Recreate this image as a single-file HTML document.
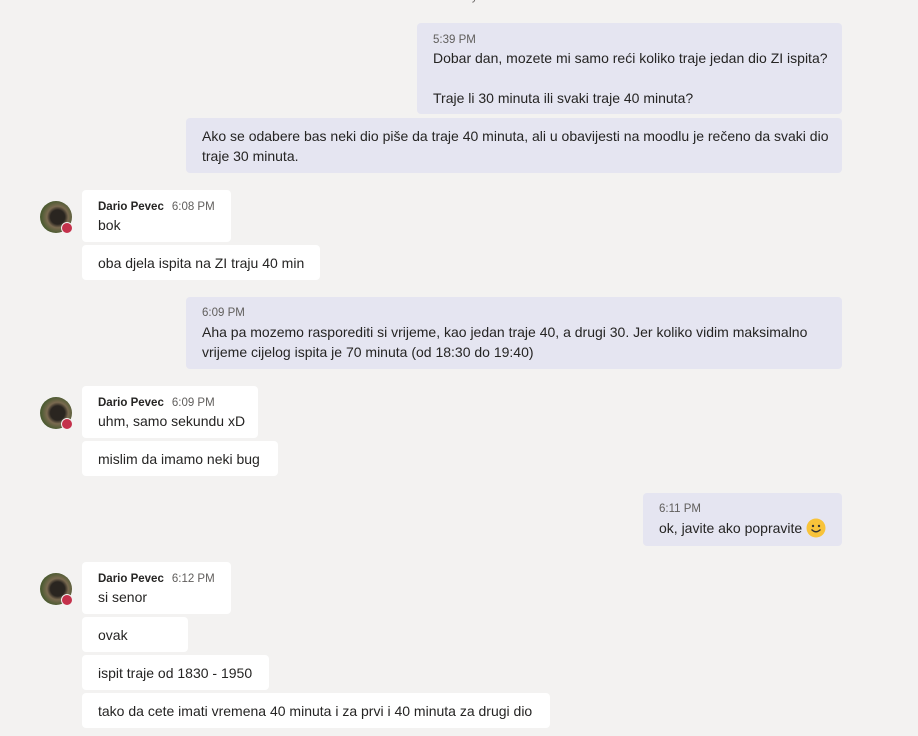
<!DOCTYPE html>
<html><head><meta charset="utf-8"><style>
body{margin:0;width:918px;height:736px;background:#f3f2f1;overflow:hidden;position:relative;font-family:"Liberation Sans",sans-serif;color:#252423;}
.b{position:absolute;border-radius:4px;box-sizing:border-box;padding:0 16px;}
.r{background:#e5e5f1;}
.l{background:#fff;}
.t{position:absolute;left:16px;font-size:14px;line-height:20px;white-space:nowrap;}
.m{position:absolute;left:16px;font-size:11.5px;color:#605e5c;white-space:nowrap;line-height:16px;}
.m b{color:#252423;font-weight:bold;margin-right:8px;}
.av{position:absolute;left:40px;width:32px;height:32px;border-radius:50%;background:radial-gradient(circle at 55% 50%,#2a2520 0 30%,#7a6a50 45%,#4a5a30 70%,#8a7a5a 100%);}
.av::after{content:"";position:absolute;left:21px;top:21px;width:10px;height:10px;border-radius:50%;background:#c4314b;border:1px solid #f3f2f1;}
</style></head><body>
<div style="position:absolute;left:448px;top:-9px;font-size:11px;color:#605e5c">Today</div>

<div class="b r" style="left:417px;top:23px;width:425px;height:91px">
<div class="m" style="top:9px">5:39 PM</div>
<div class="t" style="top:25px">Dobar dan, mozete mi samo reći koliko traje jedan dio ZI ispita?</div>
<div class="t" style="top:65px">Traje li 30 minuta ili svaki traje 40 minuta?</div></div>
<div class="b r" style="left:186px;top:118px;width:656px;height:55px">
<div class="t" style="top:8px">Ako se odabere bas neki dio piše da traje 40 minuta, ali u obavijesti na moodlu je rečeno da svaki dio</div>
<div class="t" style="top:28px">traje 30 minuta.</div></div>

<div class="av" style="top:201px"></div>
<div class="b l" style="left:82px;top:190px;width:149px;height:52px">
<div class="m" style="top:9px"><b>Dario Pevec</b>6:08 PM</div>
<div class="t" style="top:25px">bok</div></div>
<div class="b l" style="left:82px;top:245px;width:238px;height:35px">
<div class="t" style="top:8px">oba djela ispita na ZI traju 40 min</div></div>

<div class="b r" style="left:186px;top:297px;width:656px;height:72px">
<div class="m" style="top:8px">6:09 PM</div>
<div class="t" style="top:25px">Aha pa mozemo rasporediti si vrijeme, kao jedan traje 40, a drugi 30. Jer koliko vidim maksimalno</div>
<div class="t" style="top:45px">vrijeme cijelog ispita je 70 minuta (od 18:30 do 19:40)</div></div>

<div class="av" style="top:397px"></div>
<div class="b l" style="left:82px;top:386px;width:176px;height:52px">
<div class="m" style="top:9px"><b>Dario Pevec</b>6:09 PM</div>
<div class="t" style="top:25px">uhm, samo sekundu xD</div></div>
<div class="b l" style="left:82px;top:441px;width:196px;height:35px">
<div class="t" style="top:8px">mislim da imamo neki bug</div></div>

<div class="b r" style="left:643px;top:493px;width:199px;height:53px">
<div class="m" style="top:8px">6:11 PM</div>
<div class="t" style="top:25px">ok, javite ako popravite <svg style="vertical-align:-5px" width="20" height="20" viewBox="0 0 20 20"><circle cx="10" cy="10" r="9.5" fill="#f8c33a"/><circle cx="7" cy="8" r="1.2" fill="#333"/><circle cx="13" cy="8" r="1.2" fill="#333"/><path d="M5.5 11.5 Q10 16 14.5 11.5" stroke="#333" stroke-width="1.3" fill="none"/></svg></div></div>

<div class="av" style="top:573px"></div>
<div class="b l" style="left:82px;top:562px;width:149px;height:52px">
<div class="m" style="top:9px"><b>Dario Pevec</b>6:12 PM</div>
<div class="t" style="top:25px">si senor</div></div>
<div class="b l" style="left:82px;top:617px;width:106px;height:35px"><div class="t" style="top:8px">ovak</div></div>
<div class="b l" style="left:82px;top:655px;width:187px;height:35px"><div class="t" style="top:8px">ispit traje od 1830 - 1950</div></div>
<div class="b l" style="left:82px;top:693px;width:468px;height:35px"><div class="t" style="top:8px">tako da cete imati vremena 40 minuta i za prvi i 40 minuta za drugi dio</div></div>
</body></html>
